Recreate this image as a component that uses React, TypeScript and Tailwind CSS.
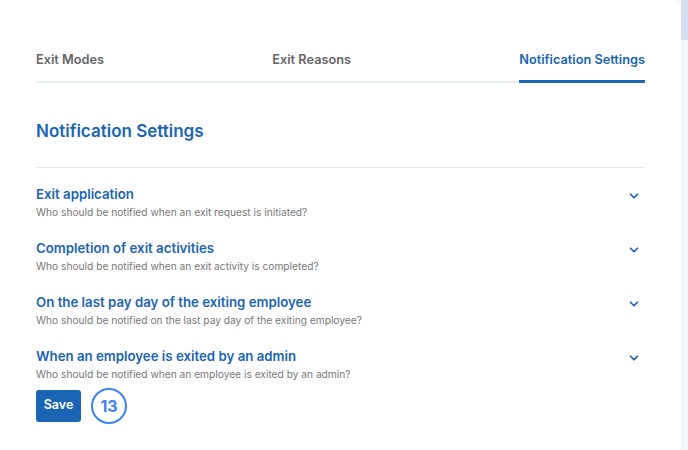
import { ChevronDown } from 'lucide-react';

const items = [
  { title: 'Exit application', desc: 'Who should be notified when an exit request is initiated?' },
  { title: 'Completion of exit activities', desc: 'Who should be notified when an exit activity is completed?' },
  { title: 'On the last pay day of the exiting employee', desc: 'Who should be notified on the last pay day of the exiting employee?' },
  { title: 'When an employee is exited by an admin', desc: 'Who should be notified when an employee is exited by an admin?' },
];

const tabs = ['Exit Modes', 'Exit Reasons', 'Notification Settings'];

export default function App() {
  return (
    <div className="flex h-[450px] w-[688px] bg-[#f3f6fa] font-['Inter',sans-serif]">
      <div className="h-full w-[681px] rounded-tr-md bg-white px-9 pt-[50px]">
        <div className="flex justify-between border-b-2 border-[#eaf0f7]">
          {tabs.map((tab, i) => (
            <div
              key={tab}
              className={`-mb-[2px] pb-[11px] text-[12.75px] font-semibold ${
                i === 2 ? 'border-b-[3px] border-[#1a64b4] text-[#1a64b4] rounded-b-[1px]' : 'border-b-[3px] border-transparent text-[#666]'
              }`}
            >
              {tab}
            </div>
          ))}
        </div>

        <h2 className="mt-[36px] text-[17px] font-semibold text-[#1a64b4]">Notification Settings</h2>
        <div className="mt-[22px] border-t border-[#e3e9f1]" />

        <div className="mt-[16px] flex flex-col gap-[17px]">
          {items.map((item) => (
            <div key={item.title} className="flex items-start justify-between">
              <div>
                <div className="text-[13.25px] font-semibold leading-[20px] text-[#1a64b4]">{item.title}</div>
                <div className="text-[10.2px] leading-[17px] text-[#777]">{item.desc}</div>
              </div>
              <ChevronDown className="mr-[4px] mt-[5px] h-[14px] w-[14px] text-[#1a64b4]" strokeWidth={3} />
            </div>
          ))}
        </div>

        <div className="mt-[5px] flex items-center gap-[10px]">
          <button className="h-[32px] w-[45px] rounded-[3px] bg-[#1a64b4] text-[12.5px] font-semibold text-white">
            Save
          </button>
          <div className="flex h-[36px] w-[36px] items-center justify-center rounded-full border-2 border-[#3b82f6] text-[16px] font-bold text-[#3b82f6]">
            13
          </div>
        </div>
      </div>
      <div className="flex w-[7px] flex-col">
        <div className="h-[40px] bg-[#d3e0ef]" />
      </div>
    </div>
  );
}
